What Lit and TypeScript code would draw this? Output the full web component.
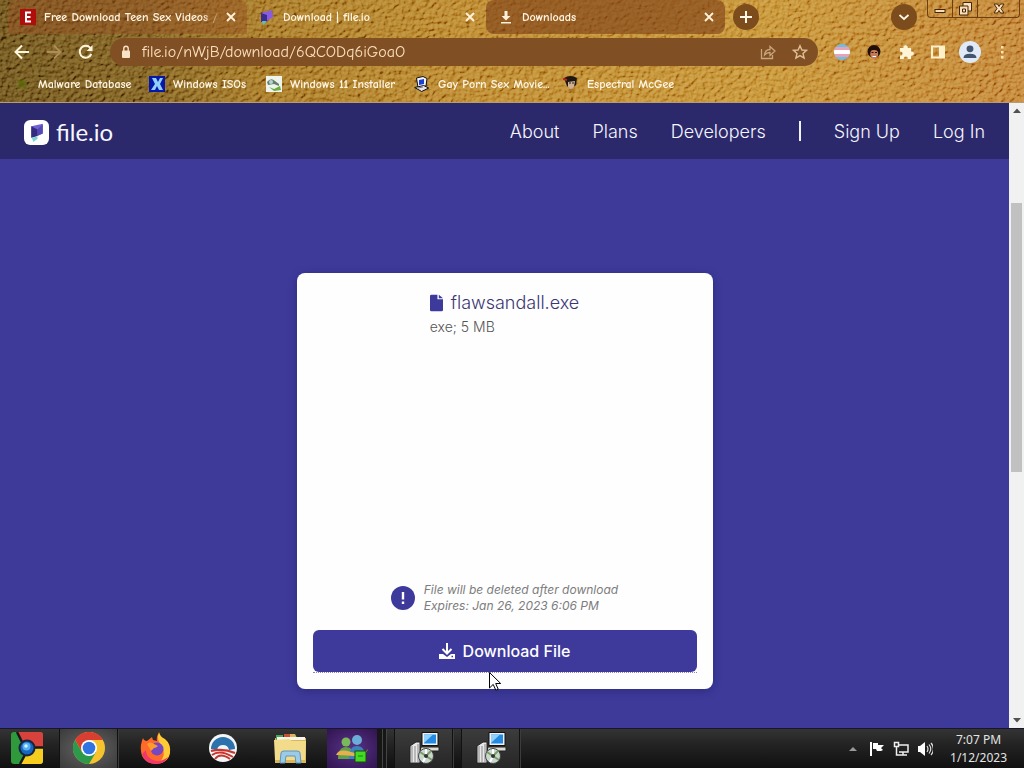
import { LitElement, html, svg, css } from "lit";
import { customElement, property } from "lit/decorators.js";

const glyphs: Record<string, unknown> = {
  site: svg`<rect width="16" height="16" fill="#b00d0d"/><path d="M11 3.5H6V12.5H11M6 8H10.5" fill="none" stroke="#fff" stroke-width="2"/>`,
  fileio: svg`<path d="M2 4 13 1 14 8 8 12 2 13Z" fill="#8a5ce0"/><path d="M2 4 8 6V13L2 13Z" fill="#3c2c8c"/><path d="M3 12H8L4 16Z" fill="#58c4b8"/>`,
  down: svg`<path d="M6.500 2h3v5h3L8 11.500 3.500 7h3ZM3 13h10v1.500H3Z" fill="#fff0dc"/>`,
  malware: svg`<path d="M2 3 6 5 8 3 10 5 14 3 11 8 14 14 8 11 2 14 5 8Z" fill="#5d6a0c" opacity=".75"/>`,
  isos: svg`<rect width="16" height="16" fill="#0718a8"/><path d="M3 2h4l2 4 2-4h3l-3 6 3 6h-4l-2-4-2 4H2l4-6Z" fill="#8fd0ff"/>`,
  win11: svg`<rect width="16" height="16" fill="#eef3ec"/><path d="M1 6q4-5 8-1l4 3v2L8 8 2 9Z" fill="#64806c"/><path d="M3 11l5 2 6-3 1 4-7 1Z" fill="#6cac3c"/><circle cx="5" cy="6" r="2" fill="#b9d4cf"/>`,
  pc: svg`<path d="M2.500 2 9 .5l4 2-1 7.500-8 1.500Z" fill="#f4f4ff" stroke="#111"/><path d="M5 4l5-1v5l-5 1Z" fill="#1c3fd0"/><path d="M.7 11.500l9-2 5 2.500-7 3.500Z" fill="#e4e2ea" stroke="#111"/><path d="M4 12l5-1" stroke="#777"/>`,
  mcgee: svg`<path d="M1 2q7-4 13 0l-1 7q-5 5-9 1Z" fill="#1d1612"/><path d="M5 6l7-1-1 6-3 2-3-2Z" fill="#d1b193"/><path d="M6 7h2M9 7h2" stroke="#222"/><path d="M6 13h5l1 2H5Z" fill="#a8792a"/><path d="M0 3l4 1" stroke="#b3271c" stroke-width="2"/>`,
  close: svg`<path d="M4 4l8 8M12 4l-8 8" stroke="#fff3dc" stroke-width="1.800"/>`,
  plus: svg`<path d="M8 2v12M2 8h12" stroke="#fff8e8" stroke-width="2"/>`,
  chevron: svg`<path d="M3.500 6 8 10 12.500 6" fill="none" stroke="#fff8e8" stroke-width="1.700"/>`,
  back: svg`<path d="M15 8H2M8 1.500 1.500 8 8 14.500" fill="none" stroke="#fff6de" stroke-width="2"/>`,
  forward: svg`<path d="M1 8h13M8 1.500 14.500 8 8 14.500" fill="none" stroke="#b08d58" stroke-width="1.800"/>`,
  reload: svg`<path d="M13.300 10A6 6 0 1 1 12.300 3.800" fill="none" stroke="#fff6de" stroke-width="2"/><path d="M14.500 1v6h-6Z" fill="#fff6de"/>`,
  lock: svg`<rect x="4" y="6.500" width="8" height="7.500" rx="1" fill="#f7e3c6"/><path d="M5.800 7V4.500a2.200 2.200 0 0 1 4.400 0V7" fill="none" stroke="#f7e3c6" stroke-width="1.400"/>`,
  share: svg`<path d="M1.500 5v9.500h11V11" fill="none" stroke="#c9a47c" stroke-width="1.300"/><path d="M4.500 11Q5 5.500 10 5.500V2.500L15 7l-5 4.500v-3Q7 8.300 4.500 11Z" fill="none" stroke="#c9a47c" stroke-width="1.300"/>`,
  star: svg`<path d="M8 1.700 9.900 6l4.600.4-3.500 3 1.100 4.600L8 11.600 3.900 14 5 9.400l-3.500-3L6.100 6Z" fill="none" stroke="#e0bf96" stroke-width="1.400"/>`,
  flag5: svg`<clipPath id="disc"><circle cx="8" cy="8" r="8"/></clipPath><g clip-path="url(#disc)"><path fill="#70bde2" d="M0 0h16v16H0z"/><path fill="#e8a2b4" d="M0 3h16v10H0z"/><path fill="#fff" d="M0 6h16v4H0z"/></g>`,
  face: svg`<ellipse cx="8" cy="7.500" rx="6.500" ry="6.500" fill="#1f0e0a"/><ellipse cx="8.200" cy="10" rx="4" ry="5" fill="#c47c58"/><path d="M5.500 8.500h2M9 8.500h2" stroke="#311"/><path d="M6.500 12.500h3.500" stroke="#fff"/><path d="M3 6.500q5-3 10 0" stroke="#1f0e0a" stroke-width="2" fill="none"/>`,
  puzzle: svg`<path d="M2 4h3.500a2.200 2.200 0 1 1 4.200 0H13v3.500a2.200 2.200 0 1 1 0 4.200V15H9.700a2 2 0 1 0-3.800 0H2v-3.500a2 2 0 1 0 0-3.800Z" fill="#fff4d6"/>`,
  panel: svg`<path fill-rule="evenodd" d="M1 1.500h14v13H1Zm2 2v9h6v-9Z" fill="#fff0c8"/>`,
  avatar: svg`<circle cx="8" cy="8" r="8" fill="#dfe9f7"/><circle cx="8" cy="5.700" r="2.500" fill="#42546e"/><path d="M3.300 12.300q0-3 4.700-3t4.700 3Z" fill="#42546e"/>`,
  dots: svg`<path d="M7 2h2.500v2.500H7zM7 7h2.500v2.500H7zM7 12h2.500v2.500H7z" fill="#ffe3b0"/>`,
  min: svg`<rect x="3" y="8.500" width="10" height="3" fill="#f7dfba" stroke="#452408"/>`,
  restore: svg`<path d="M6 1.500h8.500v8.500H11v4H2.500V5H6Z" fill="#f7dfba" stroke="#452408"/><path d="M5.500 8h3v3h-3ZM6 5h5v5" fill="none" stroke="#452408"/>`,
  wclose: svg`<path d="M3 3h3.500L8 5.500 9.500 3H13L10 7.500l3 4.500H9.500L8 9.500 6.500 12H3l3-4.500Z" fill="#f7dfba" stroke="#452408"/>`,
  logo: svg`<rect width="24" height="24" rx="6" fill="#fff"/><path d="M7 6 18 3.500V13l-7 3-4 1Z" fill="#6f62d2"/><path d="M7 6l6 3v6l-6 2Z" fill="#342a80"/><path d="M18 4v9l-5 2V9Z" fill="#5648b4"/><path d="M7.500 17l5.500-1.500v2.500L9 21Z" fill="#7fd4d0"/>`,
  doc: svg`<path d="M1.500 0H8v5h6v11.500a1.500 1.500 0 0 1-1.500 1.500h-11A1.500 1.500 0 0 1 0 16.500v-15A1.500 1.500 0 0 1 1.500 0ZM9.500 0 14 4H9.500Z" fill="#3e3a9c" />`,
  alert: svg`<circle cx="12" cy="12" r="12" fill="#3e3a9c"/><path d="M10.800 6h2.400v7.500h-2.400zM10.800 15.500h2.400V18h-2.400z" fill="#fff"/>`,
  tray: svg`<path d="M8 0v10M3.500 6 8 10.500 12.500 6" fill="none" stroke="#fff" stroke-width="2"/><path d="M0 11h4l4 3 4-3h4v5H0Z" fill="#fff"/><path d="M12.500 13.500h1.500" stroke="#3e3a9c" stroke-width="1.500"/>`,
  pointer: svg`<path d="M.5.5v15.500l3.700-3.600 2.600 5.800 2.400-1-2.500-5.700h5Z" fill="#fff" stroke="#000"/>`,
  up: svg`<path d="M4 10 8 5.500 12 10Z" fill="#505050"/>`,
  dn: svg`<path d="M4 6 8 10.500 12 6Z" fill="#505050"/>`,
  start: svg`<clipPath id="tile"><rect width="32" height="32" rx="3"/></clipPath><g clip-path="url(#tile)"><path d="M0 0h32v32H0Z" fill="#2f9a3c"/><path d="M6 0h26v15H16L10 9Z" fill="#d8423c"/><path d="M32 15v17H9l8-14Z" fill="#f6cc1e"/><path d="M6 0l6 12M32 15.500H20M9 32l6-11" stroke="#14181c" stroke-width="2.500"/></g><circle cx="16" cy="16" r="8.500" fill="#16243c"/><circle cx="16" cy="16" r="6.500" fill="#1767c0"/><circle cx="15.500" cy="14.500" r="4" fill="#54b0f0"/><circle cx="15" cy="14" r="1.800" fill="#d5f0ff"/>`,
  chrome: svg`<circle cx="16" cy="16" r="16" fill="#f6c32c"/><path d="M2.100 8A16 16 0 0 1 29.900 8H16L9 20Z" fill="#d93f31"/><path d="M2.100 8A16 16 0 0 0 16 32l7-12H9Z" fill="#2c9a4a"/><circle cx="16" cy="16" r="8" fill="#fff"/><circle cx="16" cy="16" r="6.300" fill="#2f74e0"/>`,
  firefox: svg`<path d="M3 6q1 3 4 3l5-4 1 3 4 1q-1-5 2-8 1 4 5 6 7 5 6 13-1 11-14 12Q2 31 1 19 0 13 3 6Z" fill="#ff6a2c"/><path d="M19 0q1 5 6 7 6 5 5 14-2 9-11 10 8-8 3-17-6-6-3-14Z" fill="#ffca35"/><path d="M2 22q3 10 14 10 9 0 12-7-9 7-17 2-5-3-5-9Z" fill="#f0386a"/><circle cx="17" cy="17" r="6.500" fill="#7548c2"/><path d="M7 12q3-3 7 0l4 2q-2 2-4 2l-3 3Z" fill="#ff9b2c"/>`,
  dawn: svg`<circle cx="16" cy="16" r="14" fill="#f3f5f7"/><path d="M4 17A12 12 0 0 1 28 17L22 18q-1-5-6-5t-6 5Z" fill="#2c72ac"/><path d="M4 19q12-3 24 2M5 23q8-6 21 2M8 27q5-7 15 0" stroke="#c8352c" stroke-width="2" fill="none"/>`,
  folder: svg`<path d="M1 6h10l2-4h8l2 4h9v25H1Z" fill="#d9b65a"/><path d="M2 3h7v5H2Z" fill="#4aa35a"/><path d="M10 2h6v5h-6Z" fill="#c85032"/><path d="M3 5h28v3H3Z" fill="#f8f6ea"/><path d="M0 8l15-1 3 2h14l-1 19H1Z" fill="#f2dc8c"/><path d="M6 31l1-10q0-2 3-2h13q3 0 3 2l1 10h-5l-1-7H12l-1 7Z" fill="#9ccbe8" stroke="#5d94ba"/>`,
  people: svg`<circle cx="10" cy="10" r="4.500" fill="#7ab85a"/><path d="M2 27q0-12 8-12t9 12Z" fill="#5fa04c"/><circle cx="21" cy="8" r="5" fill="#6badd8"/><path d="M13 27q0-13 8-13t9 13Z" fill="#3e82bc"/><path d="M0 23q3-7 15-3t17-3q-2 8-15 7T0 23Z" fill="#e4b14c"/><rect x="19" y="19" width="11" height="11" fill="#45d824" stroke="#174c0c"/><path d="M22 24h5" stroke="#16860c"/>`,
  setup: svg`<path d="M14 .5h16v13H14Z" fill="#eef2f6" stroke="#111"/><path d="M16 2.500h12v9H16Z" fill="#2489e0"/><path d="M16 11V2.500h9Z" fill="#8fd1fb"/><path d="M13 15h18v4H12Z" fill="#dcdcd2" stroke="#222"/><path d="M2 14 8 10h4v21H2Z" fill="#e8e8e8" stroke="#222"/><path d="M4 14v17M7 14v17M10 12v19" stroke="#888"/><circle cx="18" cy="24" r="7.500" fill="#c8d8d0" stroke="#444"/><path d="M18 24 12 20M18 24l6 4M18 24l5-5" stroke="#7c9c62" stroke-width="2"/><path d="M18 24l-3 6M18 24V17" stroke="#fff" stroke-width="2"/><circle cx="18" cy="24" r="2" fill="#333"/>`,
  flag: svg`<path d="M2 1v14" stroke="#fff" stroke-width="2"/><path d="M4 2h5v2h6l-3 3 2 2-2 1H8L7 8H4Z" fill="#fff"/>`,
  net: svg`<path d="M6 4h9v7H6M10 11v3M6 14h8" fill="none" stroke="#eee" stroke-width="1.500"/><path d="M1.500 1.500h4v4h-4zM3.500 6v8H6" fill="none" stroke="#eee" stroke-width="1.500"/>`,
  sound: svg`<path d="M1 5h2l5-4v14L3 11H1Z" fill="#fff"/><path d="M10 5q2 3 0 6M12 3.500q3.500 4.500 0 9M14 2q5 6 0 12" fill="none" stroke="#ddd" stroke-width="1.200"/>`,
  caret: svg`<path d="M4 10 8 6 12 10Z" fill="#999"/>`,
};

@customElement("ui-icon")
class UiIcon extends LitElement {
  @property() name = "";
  @property({ type: Number }) w = 16;
  @property({ type: Number }) h = 0;
  @property() box = "";
  static styles = css`:host { display: block; flex: none; } svg { display: block; }`;
  render() {
    const h = this.h || this.w;
    return html`<svg width=${this.w} height=${h} viewBox=${this.box || "0 0 16 16"} aria-hidden="true">${glyphs[this.name]}</svg>`;
  }
}

@customElement("browser-frame")
class BrowserFrame extends LitElement {
  static styles = css`
    :host { display: block; position: relative; isolation: isolate; height: 103px; overflow: hidden;
      border-bottom: 1px solid #b99a72; box-sizing: border-box;
      background: linear-gradient(90deg, #664a17 0, #77561a 14%, #a0701f 26%, #b57f25 45%, #c18b2c 75%, #bd7c2d 100%);
      font-family: "Comic Neue", "Comic Sans MS", Lato, sans-serif; font-weight: 700; color: #fff5e2; }
    .grain { position: absolute; inset: 0; width: 100%; height: 100%; z-index: -1; mix-blend-mode: soft-light; opacity: .8; }
    button { all: unset; box-sizing: border-box; display: flex; align-items: center; justify-content: center; }
    .strip { display: flex; height: 38px; padding-left: 8px; }
    .tab { display: flex; align-items: center; flex: 0 1 239px; min-width: 0; box-sizing: border-box; height: 34px; padding: 0 8px 0 12px; border-radius: 8px 8px 0 0; }
    .tab.first { background: rgba(150, 80, 35, .45); }
    .tab.last { background: rgba(122, 60, 24, .6); border-radius: 8px; }
    .title { flex: 1; min-width: 0; justify-content: flex-start; gap: 8px; font-size: 12px; }
    .label { flex: 1; white-space: nowrap; -webkit-mask-image: linear-gradient(90deg, #000 88%, transparent); }
    .round { width: 26px; height: 26px; margin: 4px 0 0 8px; border-radius: 50%; background: #7d4c1c; flex: none; }
    .round.search { margin-left: auto; margin-right: 10px; }
    .window { display: flex; height: 17px; margin-right: 4px; border: 1px solid #6d3f10; border-top: 0; border-radius: 0 0 4px 4px; }
    .window button { width: 25px; border-right: 1px solid #6d3f10; }
    .window button:last-child { width: 41px; border-right: 0; }
    .bar { display: flex; align-items: center; height: 28px; padding: 0 14px; gap: 16px; }
    .address { display: flex; align-items: center; flex: 1; height: 28px; box-sizing: border-box; padding: 0 10px 0 8px; gap: 8px; border-radius: 14px; background: #805024; }
    .address input { all: unset; flex: 1; min-width: 0; font-family: inherit; font-size: 16px; font-weight: 400; color: #fbe0c0; }
    .address .star { margin-left: 8px; }
    .marks { display: grid; grid-template-columns: 135px 117px 148px 149px auto; padding: 0 14px; height: 36px; align-items: center; }
    .marks a { display: flex; align-items: center; gap: 8px; color: inherit; text-decoration: none; font-size: 12px; white-space: nowrap; }
    .avatar { margin: 0 -3px; }
  `;
  render() {
    const tab = (icon: string, text: string, cls: string) => html`
      <div class="tab ${cls}">
        <button class="title"><ui-icon name=${icon}></ui-icon><span class="label">${text}</span></button>
        <button aria-label="Close tab"><ui-icon name="close"></ui-icon></button>
      </div>`;
    const ext = ["flag5", "face", "puzzle", "panel"];
    const marks = [["malware", "Malware Database"], ["isos", "Windows ISOs"], ["win11", "Windows 11 Installer"], ["pc", "Gay Porn Sex Movie..."], ["mcgee", "Espectral McGee"]];
    return html`
      <svg class="grain" aria-hidden="true">
        <filter id="leather" x="0" y="0" width="100%" height="100%">
          <feTurbulence type="fractalNoise" baseFrequency=".22 .26" numOctaves="3" seed="8" result="n"/>
          <feDiffuseLighting in="n" surfaceScale="3" diffuseConstant=".75" lighting-color="#fff"><feDistantLight azimuth="225" elevation="42"/></feDiffuseLighting>
        </filter>
        <rect width="100%" height="100%" filter="url(#leather)"/>
      </svg>
      <div class="strip">
        ${tab("site", "Free Download Teen Sex Videos /", "first")}
        ${tab("fileio", "Download | file.io", "")}
        ${tab("down", "Downloads", "last")}
        <button class="round" aria-label="New tab"><ui-icon name="plus"></ui-icon></button>
        <button class="round search" aria-label="Search tabs"><ui-icon name="chevron"></ui-icon></button>
        <div class="window">
          <button aria-label="Minimize"><ui-icon name="min"></ui-icon></button>
          <button aria-label="Restore"><ui-icon name="restore"></ui-icon></button>
          <button aria-label="Close"><ui-icon name="wclose"></ui-icon></button>
        </div>
      </div>
      <div class="bar">
        <button aria-label="Back"><ui-icon name="back"></ui-icon></button>
        <button aria-label="Forward"><ui-icon name="forward"></ui-icon></button>
        <button aria-label="Reload"><ui-icon name="reload"></ui-icon></button>
        <div class="address">
          <ui-icon name="lock"></ui-icon>
          <input aria-label="Address" .value=${"file.io/nWjB/download/6QCODq6iGoaO"} />
          <button aria-label="Share"><ui-icon name="share"></ui-icon></button>
          <button class="star" aria-label="Bookmark"><ui-icon name="star"></ui-icon></button>
        </div>
        ${ext.map((n) => html`<button aria-label=${n}><ui-icon name=${n}></ui-icon></button>`)}
        <button class="avatar" aria-label="Profile"><ui-icon name="avatar" w="22"></ui-icon></button>
        <button aria-label="Menu"><ui-icon name="dots"></ui-icon></button>
      </div>
      <nav class="marks">${marks.map(([i, t]) => html`<a href="#"><ui-icon name=${i}></ui-icon>${t}</a>`)}</nav>`;
  }
}

@customElement("download-page")
class DownloadPage extends LitElement {
  static styles = css`
    :host { display: flex; flex: 1; min-height: 0; font-family: Inter, sans-serif; }
    .page { flex: 1; min-width: 0; background: #3d3a9a; overflow: hidden; }
    header { display: flex; align-items: center; justify-content: space-between; height: 56px; padding: 0 24px; background: #2b296b; }
    a { color: #f6f6ff; text-decoration: none; }
    .brand { display: flex; align-items: center; gap: 7px; font: 24px/32px Lato, sans-serif; padding-top: 2px; }
    nav { display: flex; align-items: center; gap: 33px; font-size: 18px; font-weight: 300; }
    .rule { width: 2px; height: 20px; background: #f2f2fa; }
    main { display: flex; justify-content: center; padding: 114px 16px 40px; }
    .card { display: flex; flex-direction: column; align-items: center; box-sizing: border-box; width: 100%; max-width: 416px; min-height: 416px; padding: 16px; border-radius: 8px; background: #fefeff; box-shadow: 0 2px 8px rgba(20, 16, 80, .35); }
    .name { display: flex; align-items: center; gap: 8px; font-size: 18px; font-weight: 300; line-height: 28px; color: #3c3674; }
    .meta { font-size: 14px; font-weight: 300; line-height: 20px; color: #555; }
    .notice { display: flex; align-items: center; gap: 9px; margin: auto 0 16px; font-size: 12px; line-height: 16px; font-style: italic; color: #7c7c7c; }
    .action { position: relative; align-self: stretch; border-bottom: 1px dotted #8a88c4; }
    .action button { display: flex; align-items: center; justify-content: center; gap: 8px; width: 100%; height: 42px; border: 0; border-radius: 6px; background: #3e3a9c; color: #fff; font: 500 16px/24px Inter, sans-serif; }
    .pointer { position: absolute; left: 46%; top: 100%; }
    .scroll { display: flex; flex-direction: column; align-items: center; width: 15px; background: #f1f1f1; }
    .before { flex: 84; }
    .thumb { flex: 268; width: 11px; background: #c1c1c1; }
    .after { flex: 240; }
  `;
  render() {
    return html`
      <div class="page">
        <header>
          <a class="brand" href="#"><ui-icon name="logo" w="25" box="0 0 24 24"></ui-icon>file.io</a>
          <nav><a href="#">About</a><a href="#">Plans</a><a href="#">Developers</a><span class="rule"></span><a href="#">Sign Up</a><a href="#">Log In</a></nav>
        </header>
        <main>
          <section class="card">
            <div>
              <div class="name"><ui-icon name="doc" w="13" h="18" box="0 0 14 18"></ui-icon>flawsandall.exe</div>
              <div class="meta">exe; 5 MB</div>
            </div>
            <div class="notice"><ui-icon name="alert" w="24" box="0 0 24 24"></ui-icon><div>File will be deleted after download<br />Expires: Jan 26, 2023 6:06 PM</div></div>
            <div class="action">
              <button><ui-icon name="tray"></ui-icon>Download File</button>
              <ui-icon class="pointer" name="pointer" w="13" h="19" box="0 0 13 19"></ui-icon>
            </div>
          </section>
        </main>
      </div>
      <div class="scroll">
        <ui-icon name="up"></ui-icon><div class="before"></div><div class="thumb"></div><div class="after"></div><ui-icon name="dn"></ui-icon>
      </div>`;
  }
}

@customElement("task-bar")
class TaskBar extends LitElement {
  static styles = css`
    :host { display: flex; align-items: stretch; height: 40px; box-sizing: border-box; border-top: 1px solid #17162a; background: linear-gradient(#343434, #232323 40%, #101010); font-family: "Noto Sans", sans-serif; color: #e4e4e4; }
    button { all: unset; box-sizing: border-box; display: flex; align-items: center; justify-content: center; }
    .apps { display: flex; gap: 8px; }
    .app { width: 59px; padding-bottom: 2px; }
    .start { width: 51px; padding-left: 2px; }
    .open { border: 1px solid #111; border-width: 0 1px; background: linear-gradient(#3c3c3c, #262626); box-shadow: 1px 0 #3c3c3c; }
    .active { background: radial-gradient(#666, #3a3a3a); }
    .chat { width: 50px; background: radial-gradient(#5a3388, #301450); margin-right: 9px; box-shadow: 5px 0 #161616, 6px 0 #444, 9px 0 #161616, 10px 0 #444; }
    .status { display: flex; align-items: center; gap: 8px; margin-left: auto; padding-right: 17px; }
    time { margin-left: 9px; text-align: center; font-size: 12px; line-height: 18px; }
  `;
  render() {
    const apps = [["start", "start"], ["chrome", "open active"], ["firefox", ""], ["dawn", ""], ["folder", ""], ["people", "chat"], ["setup", "open"], ["setup", "open"]];
    return html`
      <div class="apps">${apps.map(([n, c]) => html`<button class="app ${c}" aria-label=${n}><ui-icon name=${n} w="32" box="0 0 32 32"></ui-icon></button>`)}</div>
      <div class="status">
        ${["caret", "flag", "net", "sound"].map((n) => html`<button aria-label=${n}><ui-icon name=${n}></ui-icon></button>`)}
        <time>7:07 PM<br />1/12/2023</time>
      </div>`;
  }
}

@customElement("app-root")
class AppRoot extends LitElement {
  static styles = css`:host { display: flex; flex-direction: column; height: 100vh; overflow: hidden; }`;
  render() {
    return html`<browser-frame></browser-frame><download-page></download-page><task-bar></task-bar>`;
  }
}
